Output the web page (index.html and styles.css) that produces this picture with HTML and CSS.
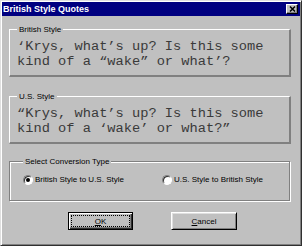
FILE: index.html
```html
<!DOCTYPE html>
<html>
<head>
<meta charset="utf-8">
<title>British Style Quotes</title>
<link rel="stylesheet" href="styles.css">
</head>
<body>
<div class="window">
  <div class="titlebar">
    <span class="title">British Style Quotes</span>
    <span class="close"><svg width="7" height="6" viewBox="0 0 7 6"><path d="M1 0.5l5 5M6 0.5l-5 5" stroke="#000" stroke-width="1.5" fill="none"/></svg></span>
  </div>
  <div class="client">
    <fieldset class="quote">
      <legend>British Style</legend>
      <p class="text">‘Krys, what’s up? Is this some kind of a “wake” or what’?</p>
    </fieldset>
    <fieldset class="quote us">
      <legend>U.S. Style</legend>
      <p class="text">“Krys, what’s up? Is this some kind of a ‘wake’ or what?”</p>
    </fieldset>
    <fieldset class="convert">
      <legend>Select Conversion Type</legend>
      <div class="options">
        <label class="radio"><span class="dot checked"></span>British Style to U.S. Style</label>
        <label class="radio"><span class="dot"></span>U.S. Style to British Style</label>
      </div>
    </fieldset>
    <div class="buttons">
      <span class="btn default"><span class="focus"><u>O</u>K</span></span>
      <span class="btn"><u>C</u>ancel</span>
    </div>
  </div>
</div>
</body>
</html>
```
FILE: styles.css
```css
* { box-sizing: border-box; }
html, body { margin: 0; padding: 0; }
body {
  width: 302px;
  height: 246px;
  overflow: hidden;
  background: #c0c0c0;
  font-family: "Liberation Sans", Arial, sans-serif;
  font-size: 8px;
  color: #000;
}
.window {
  width: 302px;
  height: 246px;
  background: #c0c0c0;
  border: 1px solid;
  border-color: #dfdfdf #303030 #303030 #dfdfdf;
  box-shadow: inset 1px 1px #fff, inset -1px -1px #808080;
  padding: 1px;
}
.titlebar {
  height: 14px;
  background: #000080;
  display: flex;
  align-items: center;
  justify-content: space-between;
  padding: 0 2px 0 1px;
}
.title {
  color: #fff;
  font-weight: bold;
  font-size: 9px;
  line-height: 14px;
}
.close {
  width: 12px;
  height: 10px;
  background: #c0c0c0;
  border: 1px solid;
  border-color: #fff #000 #000 #fff;
  box-shadow: inset -1px -1px #808080;
  display: flex;
  align-items: center;
  justify-content: center;
}
.close svg { display: block; }
.client {
  padding: 9px 9px 0 7px;
}
fieldset {
  margin: 0;
  min-width: 0;
}
legend {
  font-size: 8px;
  line-height: 9px;
  height: 9px;
  padding: 0 2px;
  background: #c0c0c0;
}
.quote {
  width: 282px;
  border-style: solid;
  border-width: 1px 2px 2px 1px;
  border-color: #fff #808080 #808080 #fff;
  padding: 5px 4px 6px 7px;
}
.quote.us { margin-top: 15px; }
.text {
  margin: 0;
  font-family: "Liberation Mono", "Courier New", monospace;
  font-size: 13.7px;
  line-height: 15px;
  color: #3a3a3a;
}
.convert {
  width: 281px;
  margin-top: 13px;
  border: 1px solid #808080;
  box-shadow: inset 1px 1px #fff, 1px 1px 0 #fff;
  padding: 9px 4px 15px 13px;
}
.options {
  display: grid;
  grid-template-columns: 139px 1fr;
}
.radio {
  display: flex;
  align-items: center;
  gap: 2px;
  line-height: 10px;
  height: 10px;
}
.dot {
  width: 10px;
  height: 10px;
  border-radius: 50%;
  background: #fff;
  border: 1px solid;
  border-color: #808080 #fff #fff #808080;
  box-shadow: inset 1px 1px #303030;
  display: flex;
  align-items: center;
  justify-content: center;
}
.dot.checked::after {
  content: "";
  width: 4px;
  height: 4px;
  border-radius: 50%;
  background: #000;
}
.buttons {
  display: flex;
  gap: 38px;
  margin: 11px 0 0 59px;
}
.btn {
  width: 66px;
  height: 18px;
  display: flex;
  align-items: center;
  justify-content: center;
  border: 1px solid;
  border-color: #fff #000 #000 #fff;
  box-shadow: inset 1px 1px #dfdfdf, inset -1px -1px #808080;
  line-height: 9px;
}
.btn.default {
  width: 65px;
  border-color: #000;
  box-shadow: inset 1px 1px #fff, inset -1px -1px #303030, inset -2px -2px #808080;
  padding: 2px;
}
.focus {
  width: 100%;
  height: 100%;
  border: 1px dotted #000;
  display: flex;
  align-items: center;
  justify-content: center;
}
u { text-decoration: underline; }
```
